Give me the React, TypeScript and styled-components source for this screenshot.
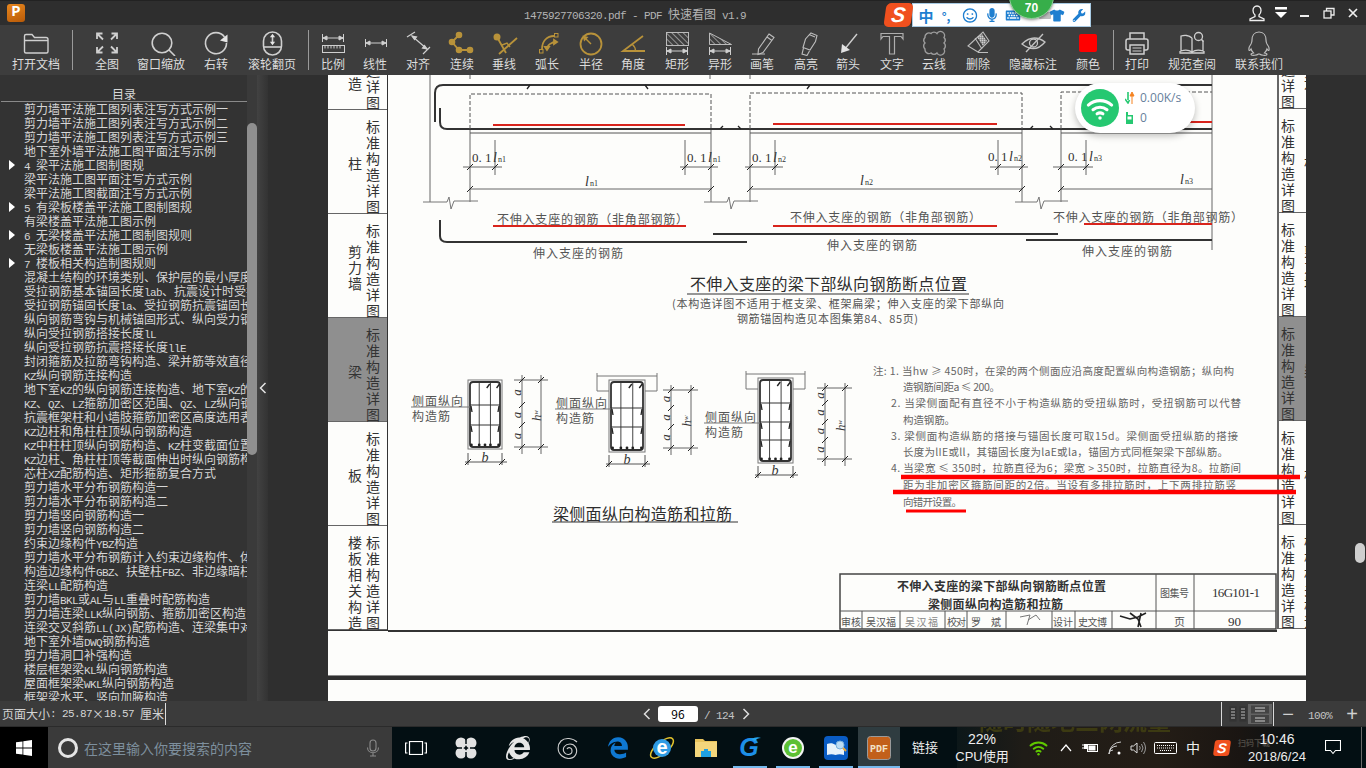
import React from 'react';
import styled, { createGlobalStyle } from 'styled-components';
import { FaRegSmile, FaMicrophone, FaKeyboard, FaTshirt, FaWrench, FaEdgeLegacy, FaInternetExplorer } from 'react-icons/fa';

const CJK = '"Noto Sans CJK SC", "Liberation Sans", sans-serif';
const MONO = '"Liberation Mono", "Noto Sans CJK SC", monospace';
const SERIF = '"Liberation Serif", "Noto Sans CJK SC", serif';

const Global = createGlobalStyle`
  html, body { margin: 0; padding: 0; background: #000; overflow: hidden; }
  * { box-sizing: border-box; }
`;

const Screen = styled.div`
  position: relative; width: 1366px; height: 768px; overflow: hidden;
  display: flex; flex-direction: column;
  font-family: ${CJK}; font-size: 12px; color: #ddd; background: #333;
`;

/* ---------- title bar ---------- */
const TitleBar = styled.header`
  height: 25px; flex: none; display: flex; align-items: center;
  background: #2e2e2e; border-top: 1px solid #222; padding-left: 7px;
`;
const Logo = styled.div`
  width: 18px; height: 18px; border-radius: 3px; flex: none;
  background: linear-gradient(160deg, #e8871e, #b85a08);
  color: #fff; font: bold 15px/18px "Liberation Mono", monospace; text-align: center;
`;
const Title = styled.div`
  margin-left: 499px; color: #b4b4b4; white-space: pre; font-size: 12px;
`;
const Latin = styled.span`
  font-family: ${MONO}; font-size: 11px; letter-spacing: -0.6px;
`;
const Times = styled.span`
  display: inline-block; width: 12px; text-align: center; font-family: ${CJK};
`;
const WinControls = styled.div`
  margin-left: auto; margin-right: 1px; display: flex;
`;
const WinCell = styled.div`
  width: 24px; height: 24px; display: flex; align-items: center; justify-content: center;
`;

/* ---------- toolbar ---------- */
const Toolbar = styled.nav`
  height: 50px; flex: none; display: flex; background: #3d3d3d; padding-top: 5px;
`;
const ToolItem = styled.div<{ $ml: number; $w: number }>`
  margin-left: ${p => p.$ml}px; width: ${p => p.$w}px; flex: none;
  display: flex; flex-direction: column; align-items: center;
  height: 40px; white-space: nowrap;
`;
const ToolLabel = styled.span`
  font-size: 12px; line-height: 14px; color: #dcdcdc; margin-top: 1px;
`;
const ToolIcon = styled.svg`
  width: 40px; height: 26px; flex: none; fill: none; stroke: #cfcfcf; stroke-width: 1.4;
`;
const ToolSep = styled.div<{ $ml: number }>`
  margin-left: ${p => p.$ml}px; width: 1px; height: 40px; background: #9a9a9a; flex: none;
`;

/* ---------- main ---------- */
const Main = styled.main`
  height: 626px; flex: none; display: flex; background: #333;
`;
const Sidebar = styled.aside`
  width: 247px; flex: none; overflow: hidden; background: #333;
`;
const TocHead = styled.div`
  height: 27px; border-bottom: 1px solid #8a8a8a; margin-left: 1px; text-align: center;
  padding-top: 10px; line-height: 17px; color: #d8d8d8;
`;
const TocRow = styled.div`
  height: 14px; line-height: 14px; white-space: pre; display: flex; color: #d6d6d6;
`;
const TocMark = styled.span<{ $on?: boolean }>`
  width: 24px; flex: none; padding-left: 9px; display: flex; align-items: center;
  ${p => p.$on ? `&::before {
    content: ''; border-left: 6px solid #fff; border-top: 5px solid transparent; border-bottom: 5px solid transparent;
  }` : ''}
`;
const Track = styled.div`
  width: 10px; flex: none; background: #3a3a3a; padding-top: 48px;
`;
const Thumb = styled.div`
  height: 332px; background: #8f8f8f; border-radius: 5px;
`;
const Collapse = styled.div`
  width: 11px; flex: none; background: linear-gradient(90deg, #424242, #333);
  display: flex; align-items: center; justify-content: center;
`;
const Viewer = styled.section`
  flex: 1; position: relative; background: #2f2f2f; padding-left: 60px; overflow: hidden;
`;
const Page = styled.div`
  width: 978px; height: 600px; background: #fdfdfb; display: flex; align-items: flex-start;
  box-shadow: 0 1px 0 #8a8a8a;
`;
const NextPage = styled.div`
  width: 978px; height: 30px; margin-top: 5px; background: #fdfdfb;
`;
const Tabs = styled.div<{ $right?: boolean }>`
  width: ${p => (p.$right ? 29 : 60)}px; height: ${p => (p.$right ? 554 : 556)}px; flex: none; overflow: hidden;
  display: flex; flex-direction: column; justify-content: flex-end;
  ${p => (p.$right ? 'border-left: 2px solid #666;' : 'border-right: 1px solid #333; border-bottom: 1px solid #333;')}
`;
const TabRow = styled.div<{ $active?: boolean; $right?: boolean }>`
  height: 104px; flex: none; display: flex; gap: ${p => (p.$right ? 9 : 4)}px; align-items: flex-start;
  justify-content: ${p => (p.$right ? 'flex-start' : 'flex-end')};
  padding: ${p => (p.$right ? '10px 0 0 2px' : '10px 7px 0 0')};
  background: ${p => (p.$active ? '#8f8f8f' : 'transparent')};
  border-bottom: 1px solid #666;
  color: #333;
`;
const VText = styled.div`
  writing-mode: vertical-rl; text-orientation: upright; white-space: nowrap;
  font-size: 14px; line-height: 14px; letter-spacing: 2px; flex: none;
`;
const VOuter = styled(VText)<{ $mode: 'center' | 'top' | 'low' }>`
  ${p => (p.$mode === 'center' ? 'align-self: center; margin-top: -4px;' : '')}
  ${p => (p.$mode === 'low' ? 'margin-top: 61px;' : '')}
`;
const Drawing = styled.svg`
  width: 889px; height: 556px; flex: none; overflow: visible; position: relative; z-index: 1;
`;
const DocThumb = styled.div`
  position: absolute; right: 1px; top: 468px; width: 10px; height: 20px;
  border-radius: 5px; background: #cfcfcf;
`;
const Dt = styled.text<{ $s?: number; $c?: string; $w?: number }>`
  font-family: ${CJK}; font-size: ${p => p.$s ?? 12}px; fill: ${p => p.$c ?? '#555'};
  font-weight: ${p => p.$w ?? 400}; dominant-baseline: central;
`;
const DtSerif = styled.text<{ $s?: number; $i?: boolean }>`
  font-family: ${SERIF}; font-size: ${p => p.$s ?? 12}px; fill: #333;
  font-style: ${p => (p.$i ? 'italic' : 'normal')}; dominant-baseline: central;
`;

/* ---------- status ---------- */
const StatusBar = styled.div`
  height: 26px; flex: none; display: flex; align-items: center; background: #3b3b3b;
  border-bottom: 1px solid #2b2b2b;
`;
const PageSize = styled.div`
  width: 643px; flex: none; padding-left: 2px; white-space: pre; color: #d4d4d4;
  display: flex; height: 22px; line-height: 22px;
`;
const Caret = styled.span`
  width: 1px; height: 22px; background: #ddd; margin-left: 1px;
`;
const PageBox = styled.div`
  width: 40px; height: 16px; margin: 0 6px 0 7px; background: #fff; border-radius: 3px;
  color: #000; text-align: center; line-height: 16px;
`;
const PageTotal = styled.span`
  color: #c4c4c4; margin-right: 8px; white-space: pre;
`;
const StatusRight = styled.div`
  margin-left: auto; display: flex; align-items: center; height: 24px;
`;
const ViewGroup = styled.div`
  display: flex; align-items: center; height: 24px; padding: 0 0 0 5px; width: 53px;
  border-left: 1px solid #d8d8d8; border-right: 1px solid #d8d8d8;
`;
const ViewBtn = styled.div<{ $active?: boolean }>`
  width: ${p => (p.$active ? 24 : 21)}px; height: 20px; display: flex; align-items: center; justify-content: center;
  background: ${p => (p.$active ? '#636363' : 'transparent')};
`;
const Zoomer = styled.div<{ $w: number }>`
  width: ${p => p.$w}px; text-align: center; color: #c4c4c4; white-space: nowrap;
`;
const ZoomSign = styled(Zoomer)`
  font: 20px/24px "Liberation Sans", sans-serif; color: #d0d0d0;
`;

/* ---------- taskbar ---------- */
const Taskbar = styled.footer`
  height: 41px; flex: none; display: flex; background: #030f13; color: #eee;
`;
const StartBtn = styled.div`
  width: 48px; flex: none; background: #000; display: flex; align-items: center; justify-content: center;
`;
const SearchBox = styled.div`
  width: 344px; flex: none; background: #3a3a3a; display: flex; align-items: center; padding-left: 10px;
`;
const Cortana = styled.div`
  width: 20px; height: 20px; border: 3px solid #e4e4e4; border-radius: 50%; flex: none; margin-right: 6px;
`;
const SearchHint = styled.span`
  font-size: 14px; color: #7d8f9d; white-space: nowrap;
`;
const SearchMic = styled.div`
  margin-left: auto; margin-right: 12px; display: flex;
`;
const TaskCell = styled.div<{ $w: number; $ml?: number; $run?: boolean; $active?: boolean }>`
  width: ${p => p.$w}px; margin-left: ${p => p.$ml ?? 0}px; flex: none;
  display: flex; align-items: center; justify-content: center; position: relative;
  background: ${p => (p.$active ? '#2f3c40' : 'transparent')};
  ${p => (p.$run ? 'box-shadow: inset 0 -2px 0 #76b9ed;' : '')}
`;
const Tray = styled.div`
  position: relative; flex: 1; display: flex; align-items: stretch;
`;
const TrayBack = styled.div`
  position: absolute; left: 57px; top: 0; width: 333px; height: 41px; overflow: hidden;
  background: linear-gradient(90deg, #0c1719 0, #1f1c17 20%, #241d16 60%, #1a1512 85%, #0c1214 100%);
`;
const TrayGhost = styled.div`
  position: absolute; left: 22px; top: -19px; font-size: 24px; line-height: 24px; font-weight: 700; color: #3c3a12;
  filter: blur(0.5px); white-space: nowrap;
`;
const TrayGhostSmall = styled.div`
  position: absolute; left: 281px; top: 10px; font-size: 8px; line-height: 12px; font-weight: 700; color: #4a4640; white-space: nowrap;
`;
const TrayCell = styled.div<{ $w: number; $ml?: number }>`
  position: relative; width: ${p => p.$w}px; margin-left: ${p => p.$ml ?? 0}px; flex: none;
  display: flex; flex-direction: column; align-items: center; justify-content: center; white-space: nowrap;
`;
const TrayText = styled.span<{ $s?: number }>`
  font-family: "Liberation Sans", ${CJK}; font-size: ${p => p.$s ?? 13}px; line-height: 18px; color: #eee;
`;
const TrayEdge = styled.div`
  width: 1px; margin-left: 7px; background: #6a6a6a; position: relative;
`;

/* ---------- overlays ---------- */
const Ime = styled.div`
  position: absolute; left: 885px; top: 3px; height: 24px; display: flex; align-items: center; z-index: 3;
`;
const SogouMark = styled.div<{ $small?: boolean }>`
  width: ${p => (p.$small ? 16 : 27)}px; height: ${p => (p.$small ? 16 : 24)}px;
  background: #f0501e; border-radius: ${p => (p.$small ? 3 : 5)}px; transform: skewX(-8deg);
  color: #fff; font: italic bold ${p => (p.$small ? 14 : 21)}px/${p => (p.$small ? 16 : 24)}px "Liberation Sans", sans-serif;
  text-align: center; position: relative; z-index: 1;
`;
const ImeBox = styled.div`
  width: 179px; height: 24px; background: #fff; border: 1px solid #a9cbe4; display: flex; align-items: center;
  color: #1f7fd0; position: relative;
`;
const ImeItem = styled.div<{ $x: number }>`
  position: absolute; left: ${p => p.$x}px; top: 0; height: 22px; display: flex; align-items: center; justify-content: center;
  transform: translateX(-50%); font-weight: 700;
`;
const ImeZh = styled(ImeItem)`
  font-size: 15px;
`;
const Bubble = styled.div`
  position: absolute; left: 1009px; top: -26px; width: 45px; height: 45px; border-radius: 50%; z-index: 4;
  background: #37ae4a; border: 1px solid #8fd09a; box-shadow: 0 1px 3px rgba(0,0,0,.45);
  color: #fff; font: bold 12px/14px "Liberation Sans", sans-serif; text-align: center; padding-top: 26px;
`;
const WifiCard = styled.div`
  position: absolute; left: 1075px; top: 83px; width: 120px; height: 50px; border-radius: 25px; z-index: 3;
  background: #fff; box-shadow: 0 3px 7px rgba(0,0,0,.25); display: flex; align-items: center; padding-left: 6px;
`;
const WifiDisc = styled.div`
  width: 38px; height: 38px; border-radius: 50%; background: #25c871; display: flex; align-items: center; justify-content: center; flex: none;
`;
const WifiStats = styled.div`
  margin-left: 6px; display: flex; flex-direction: column; gap: 6px;
`;
const WifiStat = styled.div`
  display: flex; align-items: center; gap: 5px; height: 14px;
  font: 12px/14px "Open Sans", sans-serif; color: #68809c;
`;

/* ---------- data ---------- */
const toc: [string, boolean?][] = [
  ['剪力墙平法施工图列表注写方式示例一'], ['剪力墙平法施工图列表注写方式示例二'], ['剪力墙平法施工图列表注写方式示例三'],
  ['地下室外墙平法施工图平面注写示例'], ['4 梁平法施工图制图规', true], ['梁平法施工图平面注写方式示例'], ['梁平法施工图截面注写方式示例'],
  ['5 有梁板楼盖平法施工图制图规', true], ['有梁楼盖平法施工图示例'], ['6 无梁楼盖平法施工图制图规则', true], ['无梁板楼盖平法施工图示例'],
  ['7 楼板相关构造制图规则', true], ['混凝土结构的环境类别、保护层的最小厚度'], ['受拉钢筋基本锚固长度lab、抗震设计时受拉'],
  ['受拉钢筋锚固长度la、受拉钢筋抗震锚固长度'], ['纵向钢筋弯钩与机械锚固形式、纵向受力钢筋'], ['纵向受拉钢筋搭接长度lL'], ['纵向受拉钢筋抗震搭接长度llE'],
  ['封闭箍筋及拉筋弯钩构造、梁并筋等效直径'], ['KZ纵向钢筋连接构造'], ['地下室KZ的纵向钢筋连接构造、地下室KZ的'],
  ['KZ、QZ、LZ箍筋加密区范围、QZ、LZ纵向钢筋'], ['抗震框架柱和小墙肢箍筋加密区高度选用表'], ['KZ边柱和角柱柱顶纵向钢筋构造'],
  ['KZ中柱柱顶纵向钢筋构造、KZ柱变截面位置'], ['KZ边柱、角柱柱顶等截面伸出时纵向钢筋构造'], ['芯柱XZ配筋构造、矩形箍筋复合方式'],
  ['剪力墙水平分布钢筋构造一'], ['剪力墙水平分布钢筋构造二'], ['剪力墙竖向钢筋构造一'], ['剪力墙竖向钢筋构造二'], ['约束边缘构件YBZ构造'],
  ['剪力墙水平分布钢筋计入约束边缘构件、体'], ['构造边缘构件GBZ、扶壁柱FBZ、非边缘暗柱'], ['连梁LL配筋构造'], ['剪力墙BKL或AL与LL重叠时配筋构造'],
  ['剪力墙连梁LLK纵向钢筋、箍筋加密区构造'], ['连梁交叉斜筋LL(JX)配筋构造、连梁集中对'], ['地下室外墙DWQ钢筋构造'], ['剪力墙洞口补强构造'],
  ['楼层框架梁KL纵向钢筋构造'], ['屋面框架梁WKL纵向钢筋构造'], ['框架梁水平、竖向加腋构造'],
];

const Mixed = ({ text }: { text: string }) => (
  <span>
    {text.split(/([\x20-\x7e]+)/).map((part, i) =>
      i % 2 ? <Latin key={i}>{part}</Latin> : <React.Fragment key={i}>{part}</React.Fragment>
    )}
  </span>
);

const G = '#b8923a';
const Gold = styled.g`
  stroke: ${G}; fill: none; stroke-width: 1.8;
`;
const DimRow = ({ y }: { y: number }) => (
  <g strokeWidth="1">
    <path d={`M9.5 ${y - 4}v8M30.5 ${y - 4}v8M10 ${y}h20`} />
    <path d={`M10 ${y}l4-2v4zM30 ${y}l-4-2v4z`} fill="#cfcfcf" />
  </g>
);

const icons: Record<string, React.ReactNode> = {
  open: <path d="M8.5 10V6A1.5 1.5 0 0 1 10 4.5h6l2.5 3H30a2 2 0 0 1 2 2v12a1.5 1.5 0 0 1-1.5 1.5H10a1.5 1.5 0 0 1-1.5-1.5zM8.5 10.5H32" />,
  fit: <g strokeWidth="1.8"><path d="M10 9V3.500h5.500M10 3.500l6 6M30 9V3.500h-5.500M30 3.500l-6 6M10 17v5.500h5.500M10 22.500l6-6M30 17v5.500h-5.500M30 22.500l-6-6" /></g>,
  zoom: <g strokeWidth="1.6"><circle cx="21" cy="13" r="9.800" /><path d="M28 20l6 6" /></g>,
  rotate: <g strokeWidth="1.6"><path d="M28.500 7A10.500 10.500 0 1 0 30.500 13" /><path d="M31.500 4.500v8l-7.500-2z" fill="#e6e6e6" stroke="none" /></g>,
  wheel: <g strokeWidth="1.6"><rect x="11.500" y="2" width="18" height="23" rx="9" /><path d="M11.500 17h18" /><path d="M20.500 6v7" /><path d="M20.500 3.800l2.600 3.400h-5.200zM20.500 15.200l2.600-3.400h-5.200z" fill="#e6e6e6" stroke="none" /></g>,
  scale: <g strokeWidth="1"><DimRow y={8} /><rect x="9.500" y="15.500" width="22" height="7" /><path d="M12 15.500v3M15 15.500v3M18 15.500v3M21 15.500v3M24 15.500v3M27 15.500v3" /></g>,
  line: <g transform="translate(1 5)"><DimRow y={8} /></g>,
  align: <g strokeWidth="1.200"><path d="M9 7l8-5M25 24l7-7M14 6l15 13" /><path d="M14 6l4.500 1-2 2.500zM29 19l-4.500-1 2-2.500z" fill="#cfcfcf" /></g>,
  cont: <Gold><path d="M17 5l-7 7 7 8h11" /><circle cx="17" cy="5" r="2.400" fill={G} /><circle cx="10" cy="12" r="2.400" fill={G} /><circle cx="17" cy="20" r="2.400" fill={G} /><circle cx="28" cy="20" r="2.400" fill={G} /></Gold>,
  perp: <Gold><path d="M13 7l9 16M33 8L15 24" /><path d="M18 15l5-2 3 4" strokeWidth="1.400" /><circle cx="13" cy="7" r="2.600" fill={G} /></Gold>,
  arc: <Gold strokeWidth="1.400"><path d="M15 19C15 11 20 6 27 6" /><path d="M20 20C20 15 24 12 30 12" /><path d="M30 12l-3-2v4zM20 20l-2-3h4z" fill={G} /><rect x="12.500" y="19.500" width="3.500" height="3.500" strokeWidth="1" /><rect x="27.500" y="3.500" width="3.500" height="3.500" strokeWidth="1" /></Gold>,
  radius: <Gold strokeWidth="2"><circle cx="20" cy="14" r="10.500" /><path d="M20 14l-7-7" strokeWidth="1.400" /><path d="M11.500 5.500l6 1.600-4.400 4.400z" fill={G} stroke="none" /></Gold>,
  angle: <Gold><path d="M32 21H10L30 6" /><path d="M19 14q3.500 3 3.500 7" strokeWidth="1.400" /></Gold>,
  rect: <g strokeWidth="1"><rect x="9.500" y="2.500" width="22" height="13" fill="url(#h1)" stroke="#bbb" /><DimRow y={21} /></g>,
  poly: <g strokeWidth="1"><path d="M9.500 3l22 11.500h-22z" fill="url(#h1)" stroke="#bbb" /><DimRow y={21} /></g>,
  pen: <g strokeWidth="1.100" stroke="#bdbdbd"><path d="M27 4l5 3.500-11 15-5 2 .5-5.500z" /><path d="M25 7l5 3.500M10 24h13" /></g>,
  mark: <g strokeWidth="1.100" stroke="#bdbdbd"><path d="M25 3l6 2.500-1.500 6L24 20l-7-2.500 2.500-8.500z" /><path d="M17.500 18l-1.500 6 5 1.500 2.500-4.500M23 4.500l6 2.500" /></g>,
  arrow: <g><path d="M29 4L16 20" strokeWidth="1.400" /><path d="M13 23l1-9 8 6z" fill="#e2e2e2" stroke="none" /></g>,
  text: <path d="M9 3.500H31V9l-2-2.500h-6.500V24h-5V6.500H11L9 9z" strokeWidth="1.200" stroke="#aeaeae" />,
  cloud: <path d="M11 7.500a4 4 0 0 1 6-4 4 4 0 0 1 6 0 4 4 0 0 1 7 4 4 4 0 0 1 0 5.500 4 4 0 0 1 0 6 4 4 0 0 1-7 4 4 4 0 0 1-6 0 4 4 0 0 1-6-4 4 4 0 0 1 0-6 4 4 0 0 1 0-5.500z" stroke="#9d9d9d" />,
  erase: <g strokeWidth="1.100" stroke="#bdbdbd"><path d="M25 2l6 9-11 11-10-6zM17 8l7 11M20 22.500h10" /><path d="M19 7l5-3 5 7-4 5z" fill="url(#h2)" stroke="none" /></g>,
  hide: <g strokeWidth="1.300" stroke="#c4c4c4"><path d="M9 14Q20 3 32 12 22 24 9 14z" /><circle cx="20.500" cy="13" r="4" /><path d="M30 4L13 22" /></g>,
  color: <rect x="11" y="4" width="18" height="18" rx="2" fill="#ff0000" stroke="none" />,
  print: <g strokeWidth="1.500"><path d="M13 9V3h14v6" /><rect x="9" y="9" width="22" height="11" rx="2" /><rect x="13" y="15" width="14" height="9" fill="#3d3d3d" /><path d="M15.500 18h9M15.500 21h9" strokeWidth="1" /></g>,
  spec: <g strokeWidth="1.300"><path d="M20 8c-3-3-8-3-11-2v15c3-1 8-1 11 1 3-2 8-2 11-1V11M20 8v14M8 21v2h24v-2" /><circle cx="26.500" cy="6.500" r="4" /><path d="M29.500 9.500l2 2" strokeWidth="1.600" /></g>,
  qq: <path d="M20 2c-5 0-7 4-7 8 0 2-.3 3-1 4-1.500 2-2.500 4-2 6 .3 1 1 .5 2-1 .5 2 1.500 3 2.500 4-2 .5-3 1-2 2 1 .5 5 .5 7-1h1c2 1.500 6 1.500 7 1 1-1 0-1.500-2-2 1-1 2-2 2.500-4 1 1.500 1.700 2 2 1 .5-2-.5-4-2-6-.7-1-1-2-1-4 0-4-2-8-7-8z" strokeWidth="1.200" stroke="#bdbdbd" />,
};

type Tool = { label?: string; icon?: string; ml: number };
const tools: Tool[] = [
  { label: '打开文档', icon: 'open', ml: 12 }, { ml: 12 },
  { label: '全图', icon: 'fit', ml: 22 }, { label: '窗口缩放', icon: 'zoom', ml: 18 }, { label: '右转', icon: 'rotate', ml: 19 },
  { label: '滚轮翻页', icon: 'wheel', ml: 20 }, { ml: 12 },
  { label: '比例', icon: 'scale', ml: 12 }, { label: '线性', icon: 'line', ml: 18 }, { label: '对齐', icon: 'align', ml: 19 },
  { label: '连续', icon: 'cont', ml: 20 }, { label: '垂线', icon: 'perp', ml: 18 }, { label: '弧长', icon: 'arc', ml: 19 },
  { label: '半径', icon: 'radius', ml: 20 }, { label: '角度', icon: 'angle', ml: 18 }, { label: '矩形', icon: 'rect', ml: 20 },
  { label: '异形', icon: 'poly', ml: 19 }, { label: '画笔', icon: 'pen', ml: 18 }, { label: '高亮', icon: 'mark', ml: 20 },
  { label: '箭头', icon: 'arrow', ml: 18 }, { label: '文字', icon: 'text', ml: 20 }, { label: '云线', icon: 'cloud', ml: 18 },
  { label: '删除', icon: 'erase', ml: 20 }, { label: '隐藏标注', icon: 'hide', ml: 19 }, { label: '颜色', icon: 'color', ml: 19 }, { ml: 13 },
  { label: '打印', icon: 'print', ml: 11 }, { label: '规范查阅', icon: 'spec', ml: 19 }, { label: '联系我们', icon: 'qq', ml: 19 },
];

/* ---------- drawing parts ---------- */
const Tick = ({ x, y }: { x: number; y: number }) => <path d={`M${x - 3} ${y + 3}L${x + 3} ${y - 3}`} stroke="#222" strokeWidth="1" />;
const Line = ({ d, c = '#666', w = 1, dash }: { d: string; c?: string; w?: number; dash?: string }) => <path d={d} fill="none" stroke={c} strokeWidth={w} strokeDasharray={dash} />;
const Brk = ({ x0, x, x1, y }: { x0: number; x: number; x1: number; y: number }) => (
  <Line d={`M${x0} ${y}H${x - 3}l2-5 2 12 3-8H${x1}`} c="#777" />
);
const Lspan = ({ x, y, sub }: { x: number; y: number; sub: string }) => (
  <>
    <DtSerif x={x} y={y} $s={14} $i>l</DtSerif>
    <DtSerif x={x + 5} y={y + 2} $s={8}>{sub}</DtSerif>
  </>
);
const Pt = ({ x, y, sub }: { x: number; y: number; sub: string }) => (
  <>
    <DtSerif x={x} y={y} $s={13}>0. 1</DtSerif>
    <Lspan x={x + 21} y={y} sub={sub} />
  </>
);

type Sec = {
  x: number; y: number; w: number; h: number; rows: number[]; flange?: boolean;
  lbl: number[]; bx: number; by: number; ax: number; hx: number; ticks: number[]; tx: number;
};
const BeamSection = ({ x, y, w, h, rows, flange, lbl, bx, by, ax, hx, ticks, tx }: Sec) => {
  const top = ticks[0], bot = ticks[ticks.length - 1];
  const hy = (top + bot) / 2 + 2;
  return (
    <g>
      {flange && <Line d={`M${x - 12} ${y - 4}H${x + w + 12}M${x - 12} ${y - 7}v18M${x + w + 12} ${y - 7}v18M${x - 12} ${y + 11}H${x}M${x + w} ${y + 11}H${x + w + 12}`} c="#777" />}
      <rect x={x} y={y} width={w} height={h} fill="#fff" stroke="#777" />
      <rect x={x + 2} y={y + 2} width={w - 4} height={h - 4} rx="3" fill="none" stroke="#333" strokeWidth="1.800" />
      <Line d={`M${x + w * 0.33} ${y + 3}V${y + h - 3}M${x + w * 0.66} ${y + 3}V${y + h - 3}`} c="#444" />
      {rows.map(r => <Line key={r} d={`M${x + 2} ${r}H${x + w - 2}`} c="#333" />)}
      {rows.map(r => <Line key={`k${r}`} d={`M${x + 4} ${r + 7}l-1-6M${x + w - 4} ${r + 7}l1-6`} c="#222" w={1.3} />)}
      <Line d={`M${x + w * 0.55} ${y + 8}l3-4M${x + w * 0.84} ${y + 8}l3-4`} c="#222" w={1.4} />
      {[0.1, 0.33, 0.5, 0.66, 0.9].map(f => <circle key={f} cx={x + w * f} cy={y + h - 4} r="1.400" fill="#222" />)}
      <Dt x={lbl[0]} y={lbl[1]} textLength={51}>侧面纵向</Dt>
      <Dt x={lbl[0]} y={lbl[1] + 15} textLength={38}>构造筋</Dt>
      <Line d={`M${lbl[0] - 1} ${lbl[1] + 7}H${x + 2}`} c="#777" />
      <DtSerif x={bx} y={by} $s={14} $i textAnchor="middle">b</DtSerif>
      <Line d={`M${x - 3} ${by + 5}H${x + w + 5}M${x} ${by - 4}v12M${x + w} ${by - 4}v12`} c="#555" />
      <Tick x={x} y={by + 5} /><Tick x={x + w} y={by + 5} />
      <Line d={`M${tx} ${top - 5}V${bot + 7}M${hx} ${top - 5}V${bot + 7}M${tx - 8} ${top}H${hx + 7}M${tx - 8} ${bot}H${hx + 7}`} c="#666" />
      {ticks.map(t => <Tick key={t} x={tx} y={t} />)}
      <Tick x={hx} y={top} /><Tick x={hx} y={bot} />
      {ticks.slice(1).map((t, i) => {
        const c = (t + ticks[i]) / 2;
        return <DtSerif key={t} x={ax} y={c} $s={13} $i textAnchor="middle" transform={`rotate(-90 ${ax} ${c})`}>a</DtSerif>;
      })}
      <DtSerif x={hx - 5} y={hy} $s={13} $i textAnchor="middle" transform={`rotate(-90 ${hx - 5} ${hy})`}>h<tspan fontSize="7">w</tspan></DtSerif>
    </g>
  );
};

const notes: [number, number, number, string][] = [
  [873, 370, 361, '注: 1. 当hw ≥ 450时，在梁的两个侧面应沿高度配置纵向构造钢筋；纵向构'],
  [903, 386, 97, '造钢筋间距a ≤ 200。'],
  [891, 402, 350, '2. 当梁侧面配有直径不小于构造纵筋的受扭纵筋时，受扭钢筋可以代替'],
  [903, 419, 52, '构造钢筋。'],
  [891, 435, 347, '3. 梁侧面构造纵筋的搭接与锚固长度可取15d。梁侧面受扭纵筋的搭接'],
  [903, 451, 325, '长度为lIE或ll，其锚固长度为laE或la，锚固方式同框架梁下部纵筋。'],
  [891, 467, 350, '4. 当梁宽 ≤ 350时，拉筋直径为6；梁宽 > 350时，拉筋直径为8。拉筋间'],
  [903, 484, 333, '距为非加密区箍筋间距的2倍。当设有多排拉筋时，上下两排拉筋竖'],
  [903, 501, 59, '向错开设置。'],
];

const Blueprint = () => (
  <Drawing viewBox="388 75 889 556">
    <Line d="M470 75v4M710 75v4M750 75v4M430 75V202M1212 75V250M470 129V202M711 129V202M750 129V202M1022 129V202M1061 129V202" c="#666" />
    <Line d="M435 122V93Q435 85 443 85H1212" c="#333" w={2} />
    <Line d="M440 108V122Q440 129 447 129H1212" c="#333" w={2} />
    <Line d="M470 129V94H711V129M750 129V93H1022V129M1061 129V92H1212" c="#555" dash="4 2" />
    <Line d="M530 85l-3 4M645 85l3 4M810 85l-3 4M720 129l3-3M741 129l-3-3M1030 129l3-3M1053 129l-3-3" c="#222" w={1.3} />
    <Line d="M493 125H685M773 124H997M1187 122H1212" c="#d8241c" w={2} />
    <Line d="M470 133H711M750 133H1022M1061 133H1212" c="#555" />
    <Line d="M463 167H502M495 140V175M680 167H718M685 140V175M745 167H783M775 140V175M990 167H1028M998 140V175M1053 167H1093M1086 140V175" c="#666" />
    {[[470, 167], [495, 167], [711, 167], [685, 167], [750, 167], [775, 167], [1022, 167], [998, 167], [1061, 167], [1086, 167]].map(([x, y]) => <Tick key={x} x={x} y={y} />)}
    <Line d="M470 189H711M750 189H1022M1061 189H1212" c="#666" />
    {[470, 711, 750, 1022, 1061].map(x => <Tick key={x} x={x} y={189} />)}
    <Brk x0={423} x={450} x1={478} y={202} /><Brk x0={704} x={730} x1={758} y={202} /><Brk x0={1015} x={1040} x1={1068} y={202} />
    <Pt x={472} y={157} sub="n1" /><Pt x={687} y={157} sub="n1" /><Pt x={752} y={157} sub="n2" /><Pt x={988} y={156} sub="n2" /><Pt x={1068} y={156} sub="n3" />
    <Lspan x={585} y={181} sub="n1" /><Lspan x={860} y={180} sub="n2" /><Lspan x={1180} y={179} sub="n3" />

    <Dt x={497} y={218} textLength={191}>不伸入支座的钢筋（非角部钢筋）</Dt>
    <Dt x={790} y={216} textLength={191}>不伸入支座的钢筋（非角部钢筋）</Dt>
    <Dt x={1053} y={216} textLength={190}>不伸入支座的钢筋（非角部钢筋）</Dt>
    <Line d="M493 226H686M773 226H997M1084 224H1212" c="#d8241c" w={2} />
    <Line d="M440 220V236Q440 242 447 242H747M713 234H1058M1026 240H1212" c="#333" w={2} />
    <Dt x={533} y={252} textLength={90}>伸入支座的钢筋</Dt>
    <Dt x={827} y={244} textLength={90}>伸入支座的钢筋</Dt>
    <Dt x={1082} y={250} textLength={90}>伸入支座的钢筋</Dt>
    <Dt x={690} y={283} $s={16} $c="#2e2e2e" textLength={277}>不伸入支座的梁下部纵向钢筋断点位置</Dt>
    <Line d="M687 294H969" c="#333" w={1.2} />
    <Dt x={672} y={303} $s={11} textLength={332}>(本构造详图不适用于框支梁、框架扁梁；伸入支座的梁下部纵向</Dt>
    <Dt x={737} y={318} $s={11} textLength={181}>钢筋锚固构造见本图集第84、85页)</Dt>

    <BeamSection x={468} y={380} w={34} h={69} rows={[405, 425]} lbl={[412, 400]} bx={485} by={457} ax={516} hx={541} tx={522} ticks={[380, 405, 425, 447]} />
    <BeamSection x={609} y={380} w={36} h={72} rows={[408, 427]} flange lbl={[556, 402]} bx={627} by={459} ax={665} hx={691} tx={671} ticks={[390, 408, 427, 448]} />
    <BeamSection x={758} y={378} w={35} h={85} rows={[403, 422, 440]} flange lbl={[705, 416]} bx={775} by={470} ax={819} hx={845} tx={825} ticks={[388, 403, 422, 440, 459]} />

    <Dt x={553} y={513} $s={16} $c="#2e2e2e" textLength={179}>梁侧面纵向构造筋和拉筋</Dt>
    <Line d="M552 522H738" c="#333" w={1.2} />

    {notes.map(([x, y, l, t]) => <Dt key={y} x={x} y={y} $s={10.5} $c="#666" textLength={l}>{t}</Dt>)}
    <Line d="M901 477H1300M893 492H1296" c="#ff0000" w={4.5} />
    <Line d="M906 511H966" c="#ff0000" w={3} />

    <rect x="840" y="574" width="436" height="55" fill="none" stroke="#444" strokeWidth="1.500" />
    <Line d="M840 611H1276M1156 574V629M1194 574V629M862 611V629M900 611V629M945 611V629M967 611V629M1006 611V629M1052 611V629M1075 611V629M1112 611V629" c="#555" />
    <Dt x={897} y={585} $s={12} $c="#333" $w={700} textLength={209}>不伸入支座的梁下部纵向钢筋断点位置</Dt>
    <Dt x={928} y={603} $s={12} $c="#333" $w={700} textLength={135}>梁侧面纵向构造筋和拉筋</Dt>
    <Dt x={1160} y={592} $s={10} textLength={29}>图集号</Dt>
    <DtSerif x={1212} y={592} $s={13} textLength={48}>16G101-1</DtSerif>
    <Dt x={841} y={621} $s={10} textLength={20}>审核</Dt>
    <Dt x={866} y={621} $s={10} textLength={30}>吴汉福</Dt>
    <Dt x={905} y={621} $s={10} $c="#888" textLength={33}>吴汉福</Dt>
    <Dt x={947} y={621} $s={10} textLength={19}>校对</Dt>
    <Dt x={971} y={621} $s={10} textLength={30}>罗　斌</Dt>
    <Line d="M1020 617l10-2-3 10M1028 620l8-5 4 5" c="#777" />
    <Dt x={1053} y={621} $s={10} textLength={20}>设计</Dt>
    <Dt x={1078} y={621} $s={10} textLength={29}>史文博</Dt>
    <Line d="M1120 616l10 3 8-2 8-4M1130 613l8 6 3 8M1138 627l3-14" c="#222" w={1.6} />
    <Dt x={1174} y={621} $s={11} textLength={11}>页</Dt>
    <DtSerif x={1228} y={621} $s={13}>90</DtSerif>
    <Line d="M388 631H1277" c="#333" w={1.8} />
  </Drawing>
);

const tabRows: { outer: string; mode: 'center' | 'top' | 'low'; active?: boolean }[] = [
  { outer: '造', mode: 'low' }, { outer: '柱', mode: 'center' }, { outer: '剪力墙', mode: 'center' },
  { outer: '梁', mode: 'center', active: true }, { outer: '板', mode: 'center' }, { outer: '楼板相关构造', mode: 'top' },
];

const TabColumn = ({ right }: { right?: boolean }) => (
  <Tabs $right={right}>
    {tabRows.map(r => (
      <TabRow key={r.outer} $active={r.active} $right={right}>
        {right ? (
          <>
            <VText>标准构造详图</VText>
            <VOuter $mode={r.mode}>{r.outer}</VOuter>
          </>
        ) : (
          <>
            <VOuter $mode={r.mode}>{r.outer}</VOuter>
            <VText>标准构造详图</VText>
          </>
        )}
      </TabRow>
    ))}
  </Tabs>
);

const Chevron = ({ dir, c = '#ddd' }: { dir: 'l' | 'r'; c?: string }) => (
  <svg width="8" height="12" viewBox="0 0 8 12" fill="none" stroke={c} strokeWidth="1.500">
    <path d={dir === 'l' ? 'M6.500 1L1.500 6l5 5' : 'M1.500 1l5 5-5 5'} />
  </svg>
);

const WifiGlyph = ({ c, s }: { c: string; s: number }) => (
  <svg width={s} height={s} viewBox="0 0 24 24" fill="none" stroke={c} strokeWidth="2.600" strokeLinecap="round">
    <path d="M2 9.500a15 15 0 0 1 20 0M6 13.500a9.500 9.500 0 0 1 12 0M9.500 17a4.500 4.500 0 0 1 5 0" />
    <circle cx="12" cy="20.500" r="1.500" fill={c} stroke="none" />
  </svg>
);

export default function App() {
  return (
    <Screen>
      <Global />
      <TitleBar>
        <Logo>P</Logo>
        <Title><Latin>1475927706320.pdf - PDF </Latin>快速看图<Latin> v1.9</Latin></Title>
        <WinControls>
          <WinCell>
            <svg width="18" height="18" viewBox="0 0 18 18" fill="none" stroke="#eee" strokeWidth="1.300"><path d="M9 2c-2.800 0-4 2-4 4.500 0 2 1 3.500 2 4.500v1.500L2 15v1.500h14V15l-5-2.500V11c1-1 2-2.500 2-4.500C13 4 11.800 2 9 2z" /></svg>
          </WinCell>
          <WinCell>
            <svg width="14" height="12" viewBox="0 0 14 12"><rect x="1" y="0" width="12" height="2.500" fill="#fff" /><path d="M1 5h12L7 11z" fill="#fff" /></svg>
          </WinCell>
          <WinCell>
            <svg width="12" height="12" viewBox="0 0 12 12"><rect x="1" y="8" width="9" height="2" fill="#eee" /></svg>
          </WinCell>
          <WinCell>
            <svg width="12" height="12" viewBox="0 0 12 12" fill="none" stroke="#eee" strokeWidth="1.300"><rect x="1" y="4" width="7" height="7" /><path d="M3.500 4V1.500H11V8H8" /></svg>
          </WinCell>
          <WinCell>
            <svg width="12" height="12" viewBox="0 0 12 12" stroke="#eee" strokeWidth="1.700"><path d="M2 2l8 8M10 2l-8 8" /></svg>
          </WinCell>
        </WinControls>
      </TitleBar>

      <Toolbar>
        {tools.map((t, i) =>
          t.label ? (
            <ToolItem key={i} $ml={t.ml} $w={t.label.length * 12}>
              <ToolIcon viewBox="0 0 40 26">
                <defs>
                  <pattern id="h1" patternUnits="userSpaceOnUse" width="4" height="4" patternTransform="rotate(-45)">
                    <line x1="0" y1="0" x2="0" y2="4" stroke="#aaa" strokeWidth="1.600" />
                  </pattern>
                  <pattern id="h2" patternUnits="userSpaceOnUse" width="2" height="2"><rect width="1" height="1" fill="#999" /></pattern>
                </defs>
                {icons[t.icon!]}
              </ToolIcon>
              <ToolLabel>{t.label}</ToolLabel>
            </ToolItem>
          ) : (
            <ToolSep key={i} $ml={t.ml} />
          )
        )}
      </Toolbar>

      <Main>
        <Sidebar>
          <TocHead>目录</TocHead>
          {toc.map(([t, mark], i) => (
            <TocRow key={i}>
              <TocMark $on={mark} />
              <Mixed text={t} />
            </TocRow>
          ))}
        </Sidebar>
        <Track><Thumb /></Track>
        <Collapse><Chevron dir="l" c="#e4e4e4" /></Collapse>
        <Viewer>
          <Page>
            <TabColumn />
            <Blueprint />
            <TabColumn right />
          </Page>
          <NextPage />
          <DocThumb />
        </Viewer>
      </Main>

      <StatusBar>
        <PageSize>页面大小<Latin>: 25.87</Latin><Times>×</Times><Latin>18.57 </Latin>厘米<Caret /></PageSize>
        <Chevron dir="l" />
        <PageBox>96</PageBox>
        <PageTotal><Latin>/ 124</Latin></PageTotal>
        <Chevron dir="r" />
        <StatusRight>
          <ViewGroup>
            <ViewBtn>
              <svg width="18" height="16" viewBox="0 0 18 16" fill="none"><rect x="0.500" y="0.500" width="7" height="15" fill="#333" /><rect x="10.500" y="0.500" width="7" height="15" fill="#333" /><path d="M2 3h4M2 6h4M2 9h4M2 12h4M12 3h4M12 6h4M12 9h4M12 12h4" stroke="#bbb" /></svg>
            </ViewBtn>
            <ViewBtn $active>
              <svg width="20" height="18" viewBox="0 0 20 18" fill="none"><rect x="1" y="0.500" width="18" height="8" fill="#444" /><rect x="1" y="10" width="18" height="8" fill="#444" /><path d="M5 3h10M5 6h10M5 13h10M5 16h10" stroke="#ccc" /></svg>
            </ViewBtn>
          </ViewGroup>
          <ZoomSign $w={28}>−</ZoomSign>
          <Zoomer $w={36}><Latin>100%</Latin></Zoomer>
          <ZoomSign $w={28}>+</ZoomSign>
        </StatusRight>
      </StatusBar>

      <Taskbar>
        <StartBtn>
          <svg width="16" height="16" viewBox="0 0 16 16" fill="#fff"><path d="M0 2.300l6.500-.9v6.200H0zM7.300 1.300L16 0v7.600H7.300zM0 8.400h6.500v6.200L0 13.700zM7.300 8.400H16V16l-8.700-1.200z" /></svg>
        </StartBtn>
        <SearchBox>
          <Cortana />
          <SearchHint>在这里输入你要搜索的内容</SearchHint>
          <SearchMic>
            <svg width="14" height="18" viewBox="0 0 14 18" fill="none" stroke="#8a8a8a" strokeWidth="1.100"><rect x="4" y="1" width="6" height="11" rx="3" /><path d="M1.500 8.500c0 7 11 7 11 0M7 14v3M4 17h6" /></svg>
          </SearchMic>
        </SearchBox>
        <TaskCell $w={48}>
          <svg width="22" height="14" viewBox="0 0 22 14" fill="none" stroke="#fff" strokeWidth="1.200"><rect x="4.500" y="0.500" width="13" height="13" /><path d="M2.500 2H.6v10h1.900M19.500 2h1.900v10h-1.900" /></svg>
        </TaskCell>
        <TaskCell $w={52}>
          <svg width="22" height="22" viewBox="0 0 22 22" fill="#e2e2e2"><circle cx="6" cy="6" r="5.500" /><circle cx="16" cy="6" r="5.500" /><circle cx="6" cy="16" r="5.500" /><circle cx="16" cy="16" r="5.500" /><path d="M11 0v7M22 11h-7M11 22v-7M0 11h7" stroke="#030f13" strokeWidth="1.500" /></svg>
        </TaskCell>
        <TaskCell $w={52}><FaInternetExplorer size={24} color="#e6e6e6" /></TaskCell>
        <TaskCell $w={48}>
          <svg width="22" height="22" viewBox="0 0 22 22" fill="none" stroke="#cfcfcf" strokeWidth="1.100"><path d="M20 5C16 1 8 0 4 4S0 15 5 19s12 3 14-2-1-10-6-10-8 4-6 8 8 3 8-1-4-4-5-2" /></svg>
        </TaskCell>
        <TaskCell $w={52}><FaEdgeLegacy size={22} color="#0f78d2" /></TaskCell>
        <TaskCell $w={36}>
          <svg width="26" height="26" viewBox="0 0 26 26">
            <ellipse cx="13" cy="13" rx="14" ry="6" transform="rotate(-40 13 13)" fill="none" stroke="#e3c32c" strokeWidth="1.500" />
            <circle cx="13" cy="13" r="9" fill="#2f9be4" />
            <text x="13" y="19" textAnchor="middle" fontFamily="Liberation Sans" fontWeight="700" fontSize="20" fill="#fff">e</text>
          </svg>
        </TaskCell>
        <TaskCell $w={52}>
          <svg width="22" height="20" viewBox="0 0 22 20"><path d="M0 1h8l2 2h12v3H0z" fill="#e8c35c" /><rect y="4" width="22" height="15" fill="#f4d67c" /><rect x="6" y="13" width="10" height="6" fill="#1f9fe0" /><rect x="9" y="11" width="4" height="2" fill="#1f9fe0" /></svg>
        </TaskCell>
        <TaskCell $w={34} $ml={1} $run>
          <svg width="26" height="26" viewBox="0 0 26 26"><text x="12" y="21" textAnchor="middle" fontFamily="Liberation Sans" fontWeight="700" fontStyle="italic" fontSize="25" fill="#1d8fe8">G</text><path d="M14 4q6-3 10-1-4 0-6 3z" fill="#28a8f0" /></svg>
        </TaskCell>
        <TaskCell $w={34} $ml={9} $run>
          <svg width="24" height="24" viewBox="0 0 24 24"><circle cx="12" cy="12" r="11" fill="#f4f4f4" /><circle cx="12" cy="12" r="9" fill="#5cc034" /><text x="12" y="17" textAnchor="middle" fontFamily="Liberation Sans" fontWeight="700" fontSize="17" fill="#fff">e</text></svg>
        </TaskCell>
        <TaskCell $w={34} $ml={9} $run>
          <svg width="24" height="24" viewBox="0 0 24 24"><rect width="24" height="24" rx="4" fill="#0a5cc4" /><path d="M3 8c3-1 6-1 8.500 1 2.500-2 5.500-2 8.500-1v11c-3-1-6-1-8.500 0C9 18 6 18 3 19z" fill="#e8f2fa" /><circle cx="16" cy="9" r="4" fill="#bcdcf4" stroke="#7ab0dc" /><path d="M19 12l3 3" stroke="#e8a83a" strokeWidth="2" /></svg>
        </TaskCell>
        <TaskCell $w={42} $ml={5} $run $active>
          <svg width="24" height="24" viewBox="0 0 24 24"><rect x="0.500" y="0.500" width="23" height="23" rx="3" fill="#c2601a" stroke="#9a9a9a" /><text x="12" y="15.500" textAnchor="middle" fontFamily="Liberation Mono" fontWeight="700" fontSize="10" fill="#f2e2c8">PDF</text></svg>
        </TaskCell>
        <Tray>
          <TrayBack>
            <TrayGhost>随时随地三网流量</TrayGhost>
            <TrayGhostSmall>扫码下载</TrayGhostSmall>
          </TrayBack>
          <TrayCell $w={50}><TrayText>链接</TrayText></TrayCell>
          <TrayCell $w={64}><TrayText $s={14}>22%</TrayText><TrayText>CPU使用</TrayText></TrayCell>
          <TrayCell $w={28} $ml={10}><WifiGlyph c="#5fc800" s={19} /></TrayCell>
          <TrayCell $w={28}>
            <svg width="12" height="8" viewBox="0 0 12 8" fill="none" stroke="#fff" strokeWidth="1.200"><path d="M1 7l5-6 5 6" /></svg>
          </TrayCell>
          <TrayCell $w={20}>
            <svg width="16" height="12" viewBox="0 0 16 12"><path d="M0 3h2M0 6h2" stroke="#fff" /><rect x="2" y="2" width="3" height="5" fill="#fff" /><rect x="5.500" y="2.500" width="10" height="7" fill="none" stroke="#fff" /><rect x="6.500" y="3.500" width="7" height="5" fill="#fff" /></svg>
          </TrayCell>
          <TrayCell $w={30}>
            <svg width="14" height="14" viewBox="0 0 14 14" fill="none" stroke="#ccc"><path d="M1 13a12 12 0 0 1 12-12M1 13a8 8 0 0 1 8-8M1 13a4 4 0 0 1 4-4" /><circle cx="11" cy="12" r="1.500" fill="#fff" stroke="none" /></svg>
          </TrayCell>
          <TrayCell $w={16}>
            <svg width="16" height="14" viewBox="0 0 16 14" fill="none" stroke="#ddd"><path d="M1 5h2.500L7 2v10L3.500 9H1z" /><path d="M9.500 5q1.500 2 0 4M11.500 3q3 4 0 8M13.500 1q4 6 0 12" stroke="#999" /></svg>
          </TrayCell>
          <TrayCell $w={38}>
            <svg width="23" height="12" viewBox="0 0 23 12" fill="none" stroke="#fff"><rect x="0.500" y="0.500" width="22" height="11" rx="1" /><path d="M3 3.500h17M3 6h17M6 8.500h11" strokeDasharray="1 1" /></svg>
          </TrayCell>
          <TrayCell $w={18}><TrayText $s={14}>中</TrayText></TrayCell>
          <TrayCell $w={40}><SogouMark $small>S</SogouMark></TrayCell>
          <TrayCell $w={70}><TrayText $s={14}>10:46</TrayText><TrayText>2018/6/24</TrayText></TrayCell>
          <TrayCell $w={42}>
            <svg width="16" height="15" viewBox="0 0 16 15" fill="none" stroke="#fff" strokeWidth="1.100"><path d="M.5.500h15v10h-5l-2.500 3-2.500-3h-5z" /></svg>
          </TrayCell>
          <TrayEdge />
        </Tray>
      </Taskbar>

      <Ime>
        <SogouMark>S</SogouMark>
        <ImeBox>
          <ImeZh $x={13}>中</ImeZh>
          <ImeItem $x={33}>°,</ImeItem>
          <ImeItem $x={57}><FaRegSmile size={15} /></ImeItem>
          <ImeItem $x={79}><FaMicrophone size={14} /></ImeItem>
          <ImeItem $x={100}><FaKeyboard size={15} /></ImeItem>
          <ImeItem $x={131}>
            <svg width="16" height="8" viewBox="0 0 16 8" fill="#bdbdbd"><rect x="3" y="1" width="12" height="7" rx="1" /></svg>
          </ImeItem>
          <ImeItem $x={144}><FaTshirt size={15} /></ImeItem>
          <ImeItem $x={166}><FaWrench size={13} /></ImeItem>
        </ImeBox>
      </Ime>
      <Bubble>70</Bubble>

      <WifiCard>
        <WifiDisc><WifiGlyph c="#fff" s={28} /></WifiDisc>
        <WifiStats>
          <WifiStat>
            <svg width="10" height="12" viewBox="0 0 10 12"><path d="M3 0v8M0 7l3 4 1.500-3" stroke="#25c871" strokeWidth="1.600" fill="none" /><path d="M7 12V3M5 4l2-4 2 4z" fill="#f58220" stroke="#f58220" /></svg>
            0.00K/s
          </WifiStat>
          <WifiStat>
            <svg width="10" height="12" viewBox="0 0 10 12"><rect x="1" y="3" width="7" height="9" fill="#25c871" /><rect x="1" y="0" width="2" height="3" fill="#25c871" /><rect x="2.500" y="4.500" width="4" height="3" fill="#fff" /></svg>
            0
          </WifiStat>
        </WifiStats>
      </WifiCard>
    </Screen>
  );
}
